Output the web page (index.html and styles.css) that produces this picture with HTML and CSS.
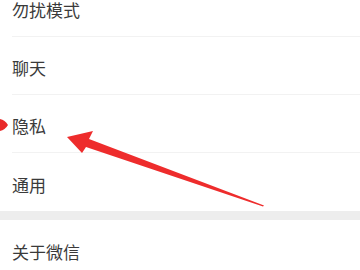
FILE: index.html
```html
<!DOCTYPE html>
<html lang="zh">
<head>
    <meta charset="UTF-8">
    <meta name="viewport" content="width=device-width, initial-scale=1.0">
    <title>设置</title>
    <link rel="stylesheet" href="styles.css">
</head>
<body>
    <div class="settings">
        <div class="group">
            <div class="item">勿扰模式</div>
            <div class="item">聊天</div>
            <div class="item">隐私</div>
            <div class="item">通用</div>
        </div>
        <div class="group">
            <div class="item">关于微信</div>
        </div>
    </div>

    <svg class="annotation" width="360" height="270" viewBox="0 0 360 270">
        <path d="M0 119 Q5 120 8 125 Q5 130 0 131 Z" fill="#e92a2a"/>
        <polygon points="67,137 93,131 89,139 264,205.5 263,206.5 86,147 82,153" fill="#ee2c2c"/>
    </svg>
</body>
</html>
```

FILE: styles.css
```css
body {
    margin: 0;
    background-color: #ffffff;
    font-family: "Noto Sans CJK SC", "Noto Sans", sans-serif;
    overflow: hidden;
}

.settings {
    margin-top: -21px;
    background-color: #ededed;
}

.group {
    background-color: #ffffff;
    margin-bottom: 9px;
}

.item {
    height: 58px;
    box-sizing: border-box;
    margin-left: 12px;
    padding-top: 4px;
    display: flex;
    align-items: center;
    font-size: 17px;
    color: #3a3a3a;
    border-bottom: 1px solid #f2f2f2;
}

.item:last-child {
    border-bottom: none;
}

.annotation {
    position: absolute;
    left: 0;
    top: 0;
}
```
